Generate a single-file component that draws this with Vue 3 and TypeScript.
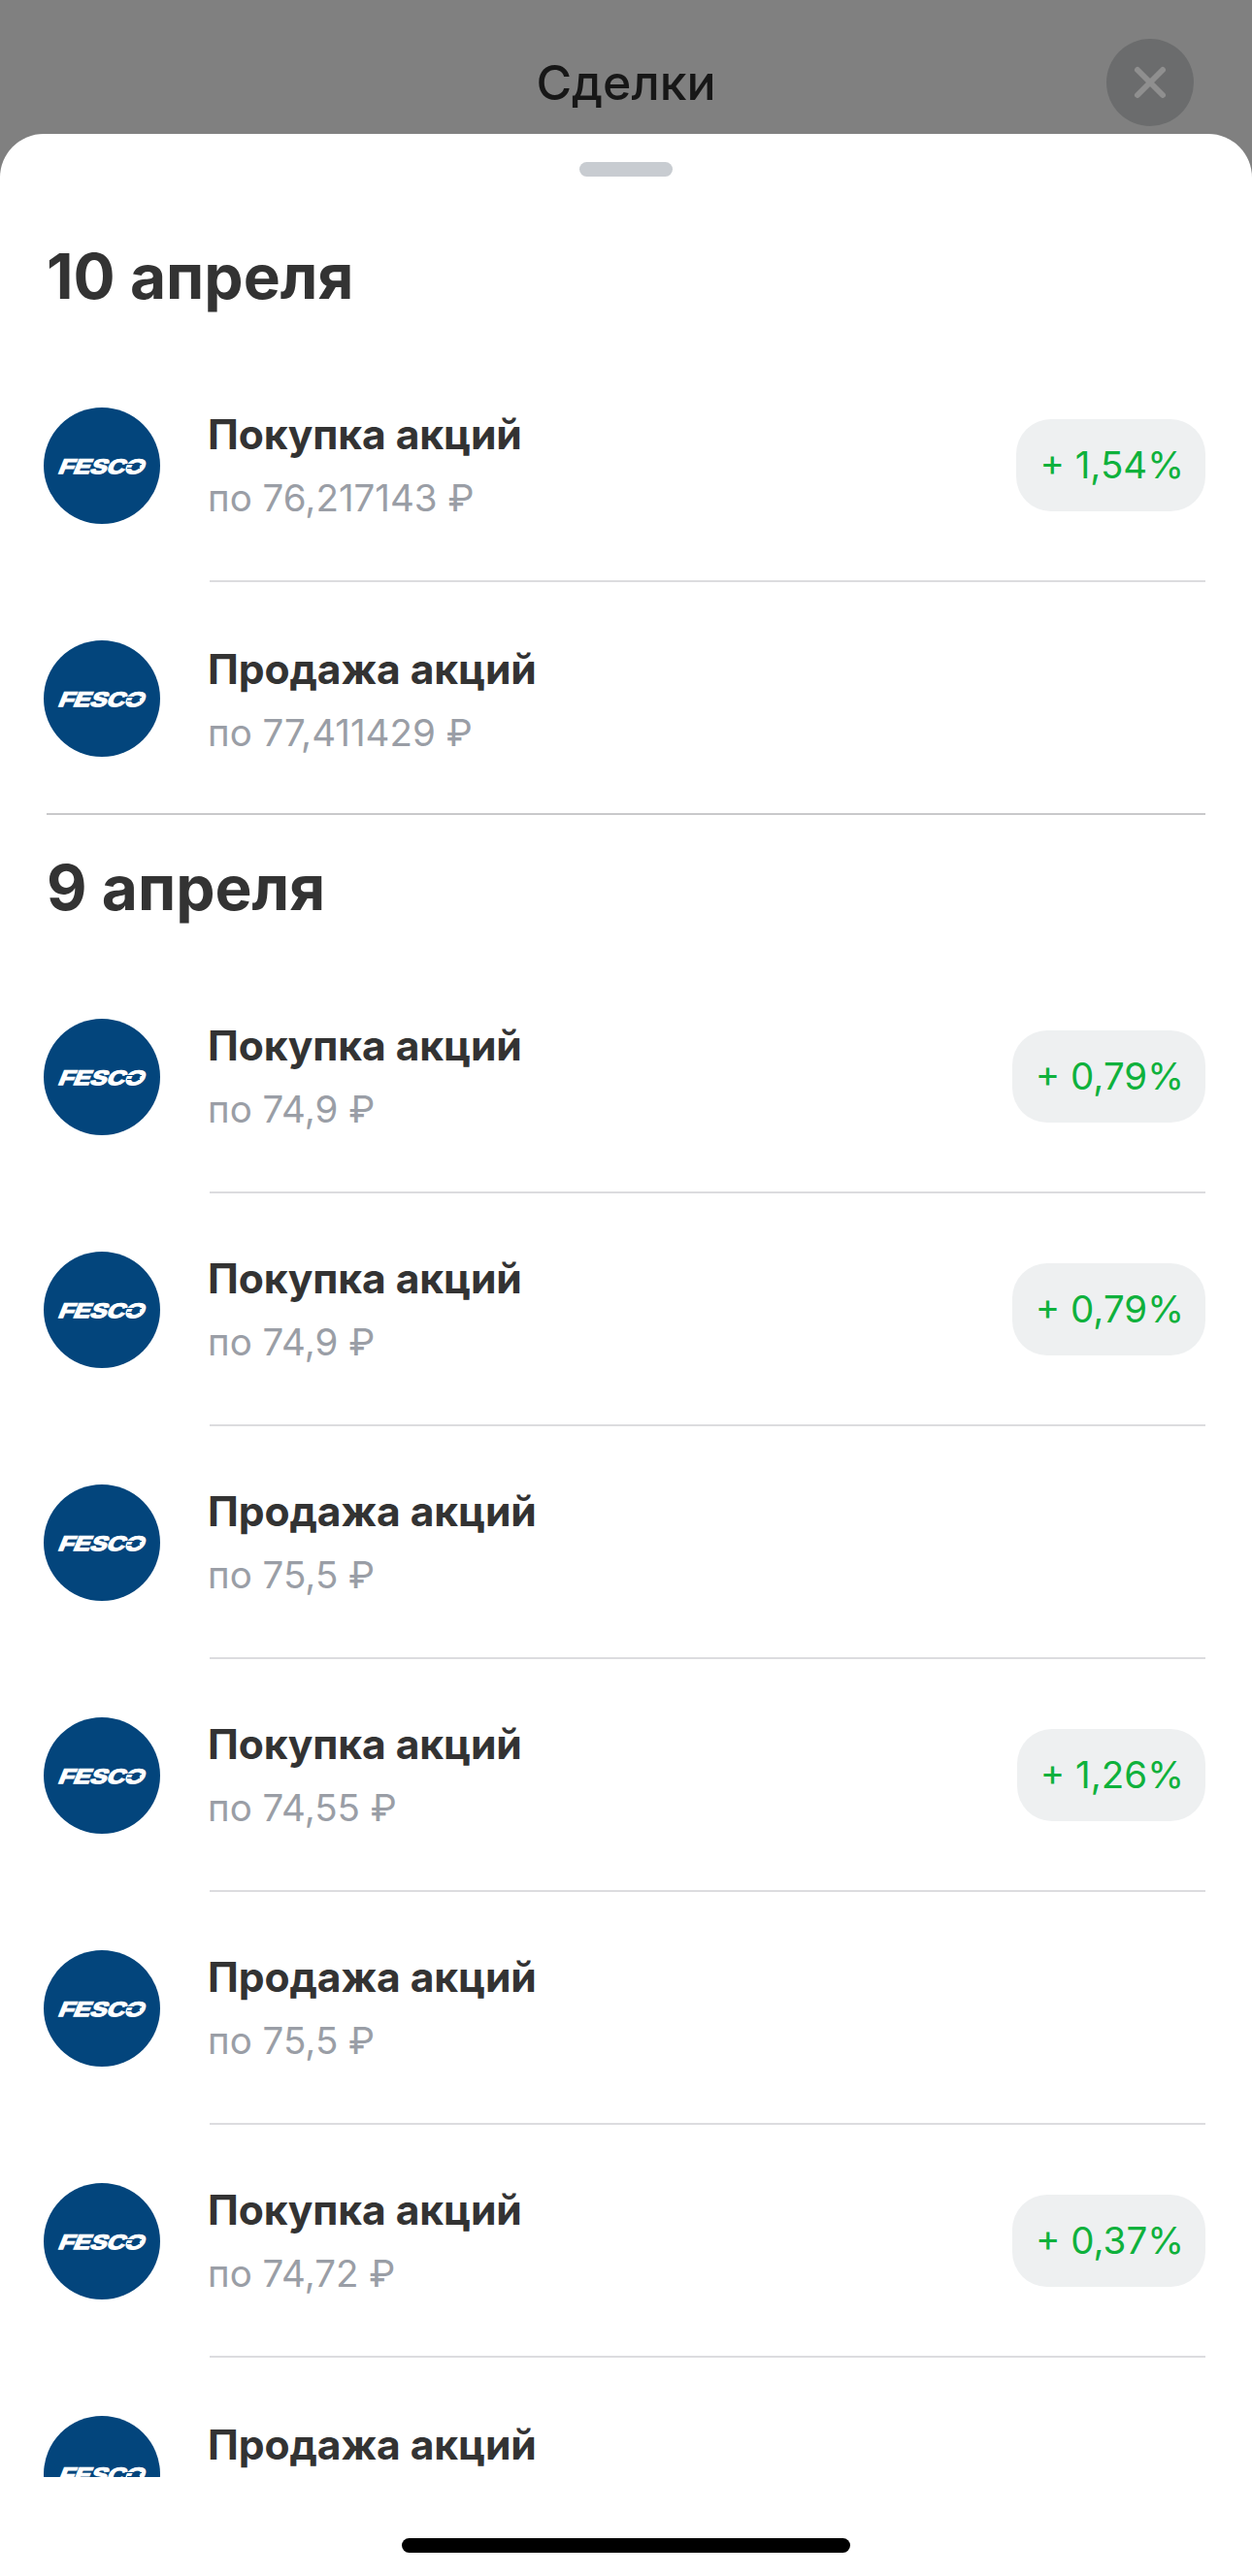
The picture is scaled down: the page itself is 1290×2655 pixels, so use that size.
<template>
  <div class="page">
    <header class="top-bar">
      <h1>Сделки</h1>
      <button class="close-btn" aria-label="Закрыть">
        <svg width="36" height="36" viewBox="0 0 36 36">
          <path d="M5 5 L31 31 M31 5 L5 31" stroke="#8f8f8f" stroke-width="6" stroke-linecap="round" />
        </svg>
      </button>
    </header>

    <main class="sheet">
      <div class="handle"></div>
      <div class="list">
        <section v-for="group in groups" :key="group.date" class="group">
          <h2>{{ group.date }}</h2>
          <div v-for="(deal, i) in group.deals" :key="i" class="deal">
            <svg class="logo" width="120" height="120" viewBox="0 0 120 120">
              <circle cx="60" cy="60" r="60" fill="#03457c" />
              <text
                transform="translate(14 68) skewX(-22)"
                textLength="88"
                lengthAdjust="spacingAndGlyphs"
                class="logo-text"
              >FESCO</text>
              <path d="M84 58.5 H101 M86 62.5 H99" stroke="#03457c" stroke-width="1.2" />
            </svg>
            <div class="deal-body">
              <div class="deal-text">
                <div class="deal-title">{{ deal.title }}</div>
                <div v-if="deal.price" class="deal-price">по {{ deal.price }} ₽</div>
              </div>
              <div v-if="deal.profit" class="profit">+ {{ deal.profit }}%</div>
            </div>
          </div>
        </section>
      </div>
      <div class="home-bar"></div>
    </main>
  </div>
</template>

<script setup lang="ts">
interface Deal {
  title: string
  price?: string
  profit?: string
}

interface Group {
  date: string
  deals: Deal[]
}

const buy = 'Покупка акций'
const sell = 'Продажа акций'

const groups: Group[] = [
  {
    date: '10 апреля',
    deals: [
      { title: buy, price: '76,217143', profit: '1,54' },
      { title: sell, price: '77,411429' }
    ]
  },
  {
    date: '9 апреля',
    deals: [
      { title: buy, price: '74,9', profit: '0,79' },
      { title: buy, price: '74,9', profit: '0,79' },
      { title: sell, price: '75,5' },
      { title: buy, price: '74,55', profit: '1,26' },
      { title: sell, price: '75,5' },
      { title: buy, price: '74,72', profit: '0,37' },
      // последняя строка обрезана снизу, цена не видна
      { title: sell }
    ]
  }
]
</script>

<style>
html,
body {
  margin: 0;
  background: #808080;
}
</style>

<style scoped>
.page {
  width: 1290px;
  height: 2655px;
  display: flex;
  flex-direction: column;
  overflow: hidden;
  background: #808080;
  font-family: Inter, 'Noto Sans', sans-serif;
}

.top-bar {
  position: relative;
  height: 138px;
  flex-shrink: 0;
  display: flex;
  justify-content: center;
  padding-top: 55px;
  box-sizing: border-box;
}

h1 {
  margin: 0;
  font-size: 50px;
  line-height: 60px;
  font-weight: 500;
  color: #171717;
}

.close-btn {
  position: absolute;
  left: 1140px;
  top: 40px;
  width: 90px;
  height: 90px;
  padding: 0;
  border: none;
  border-radius: 50%;
  background: #6b6c6d;
  display: flex;
  align-items: center;
  justify-content: center;
}

.sheet {
  flex: 1;
  min-height: 0;
  display: flex;
  flex-direction: column;
  background: #fff;
  border-radius: 45px 45px 0 0;
}

.handle {
  width: 96px;
  height: 15px;
  flex-shrink: 0;
  margin: 29px auto 28px;
  border-radius: 8px;
  background: #c8ccd1;
}

.list {
  height: 2343px;
  flex-shrink: 0;
  overflow: hidden;
  padding: 0 48px 0 45px;
}

.group + .group {
  border-top: 2px solid #c9c9cb;
  margin-top: -2px;
  margin-left: 3px;
}

.group + .group .deal {
  margin-left: -3px;
}

h2 {
  margin: 0 0 0 3px;
  height: 150px;
  box-sizing: border-box;
  padding-top: 35px;
  font-size: 64px;
  line-height: 80px;
  font-weight: 700;
  color: #333;
}

.group + .group h2 {
  margin-left: 0;
}

.deal {
  height: 240px;
  display: flex;
  align-items: center;
}

.logo {
  flex-shrink: 0;
}

.logo-text {
  font-family: 'Liberation Sans', sans-serif;
  font-size: 21px;
  font-weight: 700;
  fill: #fff;
  stroke: #fff;
  stroke-width: 1.4px;
}

.deal-body {
  flex: 1;
  height: 100%;
  margin-left: 51px;
  display: flex;
  align-items: center;
  justify-content: space-between;
  border-bottom: 2px solid #dcdcdf;
  box-sizing: border-box;
}

.deal:last-child .deal-body {
  border-bottom: none;
}

.deal:last-child .deal-text {
  align-self: flex-start;
  padding-top: 64px;
}

.deal-text {
  padding-top: 2px;
}

.deal-title {
  margin-left: -2px;
  font-size: 42.6px;
  line-height: 52px;
  font-weight: 650;
  letter-spacing: -0.1px;
  color: #333;
}

.deal-price {
  margin: 13px 0 0 -2px;
  font-size: 38.5px;
  line-height: 52px;
  color: #9a9ea6;
}

.profit {
  height: 95px;
  padding: 0 22px 0 24px;
  display: flex;
  align-items: center;
  border-radius: 36px;
  background: #eef0f1;
  font-size: 38.5px;
  color: #0fb13c;
}

.home-bar {
  width: 462px;
  height: 15px;
  margin: 63px auto 0;
  flex-shrink: 0;
  border-radius: 8px;
  background: #000;
}
</style>
